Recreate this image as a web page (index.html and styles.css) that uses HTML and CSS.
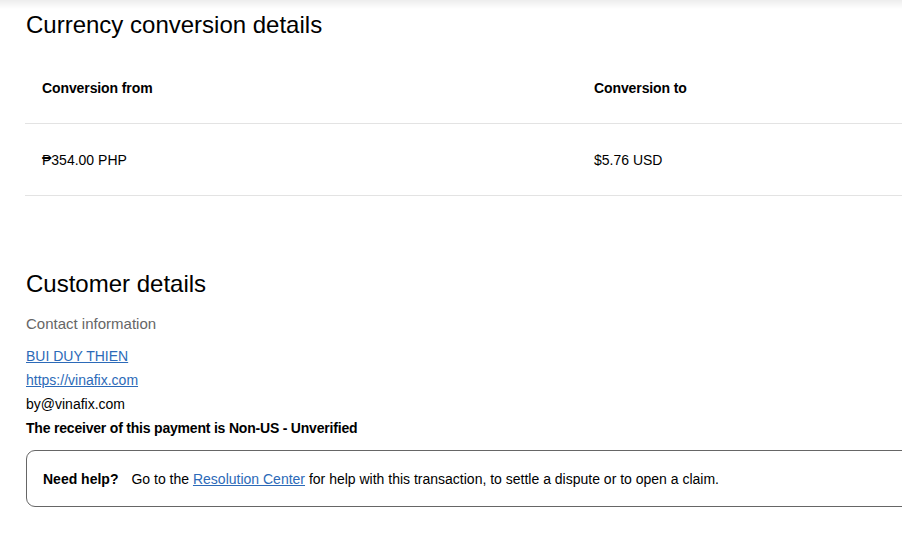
FILE: index.html
```html
<!DOCTYPE html>
<html lang="en">
<head>
<meta charset="utf-8">
<title>Transaction details</title>
<link rel="stylesheet" href="styles.css">
</head>
<body>
<div class="page">
  <section class="section conversion">
    <h2 class="title">Currency conversion details</h2>
    <div class="table">
      <div class="row head">
        <div class="cell">Conversion from</div>
        <div class="cell">Conversion to</div>
      </div>
      <div class="row">
        <div class="cell">₱354.00 PHP</div>
        <div class="cell">$5.76 USD</div>
      </div>
    </div>
  </section>

  <section class="section customer">
    <h2 class="title">Customer details</h2>
    <div class="label">Contact information</div>
    <ul class="contact">
      <li><a href="#">BUI DUY THIEN</a></li>
      <li><a href="#">https://vinafix.com</a></li>
      <li>by@vinafix.com</li>
      <li class="strong">The receiver of this payment is Non-US - Unverified</li>
    </ul>
    <div class="help">
      <strong>Need help?</strong><span class="help-text">Go to the <a href="#">Resolution Center</a> for help with this transaction, to settle a dispute or to open a claim.</span>
    </div>
  </section>
</div>
</body>
</html>
```

FILE: styles.css
```css
html, body {
  margin: 0;
  padding: 0;
  background: #ffffff;
}
body {
  font-family: "Liberation Sans", Arial, sans-serif;
  color: #000;
  overflow: hidden;
  background: linear-gradient(to bottom, #ededed 0px, #ffffff 9px) no-repeat;
}
.page {
  padding: 11px 0 0 25px;
  width: 1104px;
}
.title {
  margin: 0;
  font-size: 24px;
  line-height: 28px;
  font-weight: 400;
  padding-left: 1px;
}
.table {
  margin-top: 13px;
}
.row {
  display: grid;
  grid-template-columns: 552px 552px;
  height: 71px;
  align-items: center;
  border-bottom: 1px solid #e3e3e3;
  font-size: 14px;
}
.row.head .cell {
  font-weight: 700;
  letter-spacing: -0.1px;
}
.cell {
  padding-left: 17px;
}
.customer {
  margin-top: 74px;
}
.label {
  margin-top: 16px;
  font-size: 15px;
  line-height: 20px;
  color: #666;
  padding-left: 1px;
}
.contact {
  list-style: none;
  margin: 10px 0 0;
  padding: 0 0 0 1px;
  font-size: 14px;
}
.contact li {
  line-height: 24px;
}
.contact a {
  color: #2c6ab8;
  text-decoration: underline;
}
.contact .strong {
  font-weight: 700;
  letter-spacing: -0.2px;
}
.help {
  margin-top: 10px;
  margin-left: 1px;
  border: 1px solid #666;
  border-radius: 9px;
  height: 55px;
  display: flex;
  align-items: center;
  padding-left: 16px;
  font-size: 14px;
}
.help strong {
  font-weight: 700;
}
.help-text {
  margin-left: 13px;
}
.help a {
  color: #2c6ab8;
  text-decoration: underline;
}
```
